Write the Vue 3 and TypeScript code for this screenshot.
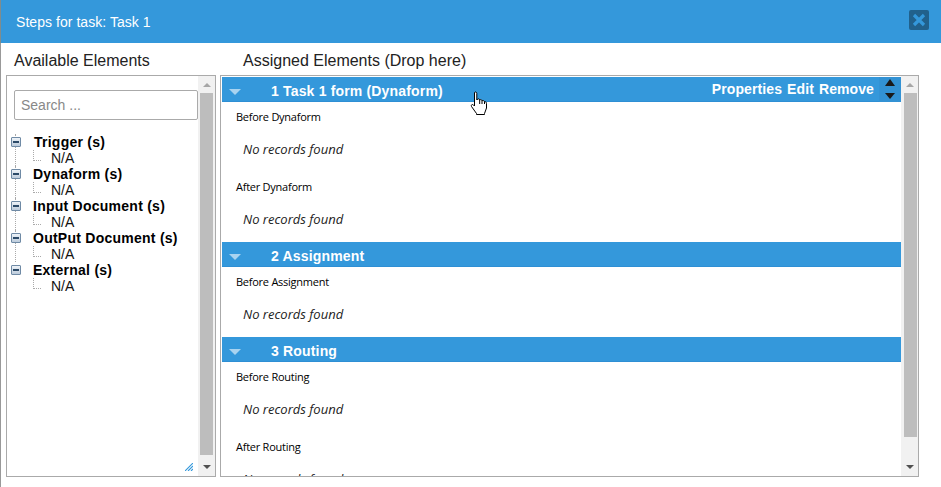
<script setup lang="ts">
interface StepGroup {
  label: string
}

interface Step {
  title: string
  groups: StepGroup[]
  actions?: boolean
}

const trees: string[] = ['Trigger (s)', 'Dynaform (s)', 'Input Document (s)', 'OutPut Document (s)', 'External (s)']

const steps: Step[] = [
  { title: '1 Task 1 form (Dynaform)', actions: true, groups: [{ label: 'Before Dynaform' }, { label: 'After Dynaform' }] },
  { title: '2 Assignment', groups: [{ label: 'Before Assignment' }] },
  { title: '3 Routing', groups: [{ label: 'Before Routing' }, { label: 'After Routing' }] },
]
</script>

<template>
  <div class="modal">
    <header class="title-bar">
      <span class="title">Steps for task: Task 1</span>
      <button class="close" type="button" aria-label="Close">
        <svg width="14" height="14" viewBox="0 0 14 14">
          <path d="M2 2 L12 12 M12 2 L2 12" stroke="#3498db" stroke-width="3.2" fill="none" />
        </svg>
      </button>
    </header>

    <div class="columns">
      <section class="left">
        <h2 class="col-title">Available Elements</h2>
        <div class="panel">
          <div class="panel-body">
            <input class="search" type="text" placeholder="Search ..." />
            <ul class="tree">
              <li v-for="item in trees" :key="item" class="tree-item">
                <div class="tree-head">
                  <span class="expander"></span>
                  <span class="tree-label">{{ item }}</span>
                </div>
                <div class="tree-leaf"><span class="leaf-line"></span>N/A</div>
              </li>
            </ul>
            <svg class="resize" width="8" height="8" viewBox="0 0 8 8">
              <path d="M0 8 L8 0 M3 8 L8 3 M6 8 L8 6" stroke="#3498db" stroke-width="1.1" fill="none" />
            </svg>
          </div>
          <div class="scrollbar">
            <span class="arrow up"></span>
            <span class="thumb"></span>
            <span class="arrow down"></span>
          </div>
        </div>
      </section>

      <section class="right">
        <h2 class="col-title">Assigned Elements (Drop here)</h2>
        <div class="panel">
          <div class="panel-body steps">
            <article v-for="step in steps" :key="step.title" class="step">
              <div class="step-head">
                <span class="caret"></span>
                <span class="step-title">{{ step.title }}</span>
                <div v-if="step.actions" class="actions">
                  <a>Properties</a>
                  <a>Edit</a>
                  <a>Remove</a>
                  <span class="sorter">
                    <span class="sort-up"></span>
                    <span class="sort-down"></span>
                  </span>
                </div>
              </div>
              <div v-for="group in step.groups" :key="group.label" class="group">
                <div class="group-label">{{ group.label }}</div>
                <div class="group-empty">No records found</div>
              </div>
            </article>
          </div>
          <div class="scrollbar">
            <span class="arrow up"></span>
            <span class="thumb"></span>
            <span class="arrow down"></span>
          </div>
        </div>
      </section>
    </div>

    <svg class="cursor" width="18" height="25" viewBox="0 0 18 25">
      <path
        d="M4.5 1.5 C5.5 0.5 6.8 1 6.8 2.5 V9 L7.8 8 C8.8 7.7 9.5 8 9.7 9 C10.5 8.3 11.7 8.5 12 9.7 C13 9.2 14.2 9.6 14.5 10.7 C15.5 10.5 16.5 11 16.5 12.5 V17 L14.5 22.5 V23.5 H6.5 V22.5 L1.5 15.5 C0.8 14 2.2 12.8 3.5 14 L4.5 15 Z"
        fill="#fff"
        stroke="#000"
        stroke-width="1"
      />
      <path d="M9.7 9 V13 M12 9.7 V13 M14.5 10.7 V13" stroke="#000" stroke-width="1" fill="none" />
    </svg>
  </div>
</template>

<style>
html,
body {
  margin: 0;
  background: #fff;
}
</style>

<style scoped>
.modal {
  position: relative;
  width: 941px;
  height: 487px;
  overflow: hidden;
  background: #fff;
  font-family: "Liberation Sans", Arial, sans-serif;
  color: #000;
}

.title-bar {
  display: flex;
  align-items: center;
  justify-content: space-between;
  height: 43px;
  padding: 0 12px 0 15px;
  background: #3498db;
  border-left: 1px solid #7f8c8d;
  box-sizing: border-box;
}

.title {
  color: #fff;
  font-size: 14px;
  letter-spacing: 0.05px;
}

.close {
  display: flex;
  align-items: center;
  justify-content: center;
  width: 20px;
  height: 20px;
  margin-top: -4px;
  padding: 0;
  border: 0;
  border-radius: 2px;
  background: #21618c;
}

.columns {
  display: flex;
  height: 444px;
  border-left: 1px solid #999;
  box-sizing: border-box;
}

.left {
  width: 210px;
  margin-left: 5px;
}

.right {
  width: 699px;
  margin-left: 4px;
}

.col-title {
  margin: 0;
  height: 32px;
  padding-top: 9px;
  padding-left: 8px;
  box-sizing: border-box;
  font-size: 16px;
  font-weight: 400;
  line-height: 18px;
  color: #222;
}

.right .col-title {
  padding-left: 23px;
}

.panel {
  display: flex;
  height: 402px;
  border: 1px solid #aaa;
  box-sizing: border-box;
  overflow: hidden;
}

.panel-body {
  position: relative;
  flex: 1;
  min-width: 0;
  overflow: hidden;
}

.search {
  display: block;
  width: 184px;
  height: 30px;
  margin: 14px 0 0 7px;
  padding: 0 6px;
  border: 1px solid #aaa;
  border-radius: 2px;
  box-sizing: border-box;
  font: 14px "Liberation Sans", Arial, sans-serif;
  outline: none;
}

.search::placeholder {
  color: #888;
}

.tree {
  margin: 14px 0 0;
  padding: 0;
  list-style: none;
}

.tree-item {
  position: relative;
  height: 32px;
}

.tree-item:not(:last-child)::before {
  content: "";
  position: absolute;
  left: 8px;
  top: 0;
  height: 32px;
  border-left: 1px dotted #aaa;
}

.tree-head {
  position: relative;
  display: flex;
  align-items: center;
  height: 16px;
  padding-left: 4px;
}

.expander {
  position: relative;
  width: 8px;
  height: 8px;
  border: 1px solid #6f8aa5;
  border-radius: 1px;
  background: linear-gradient(#eef3f8, #bccbdb);
}

.expander::after {
  content: "";
  position: absolute;
  left: 1px;
  top: 3px;
  width: 6px;
  height: 2px;
  background: #2c4a68;
}

.tree-label {
  margin-left: 12px;
  font-size: 14px;
  font-weight: 700;
  letter-spacing: 0.25px;
  line-height: 16px;
}

.tree-item:first-child .tree-label {
  margin-left: 13px;
}

.tree-leaf {
  position: relative;
  height: 16px;
  padding-left: 44px;
  font-size: 14px;
  line-height: 16px;
  color: #111;
}

.leaf-line {
  position: absolute;
  left: 26px;
  top: 0;
  width: 7px;
  height: 10px;
  border-left: 1px dotted #aaa;
  border-bottom: 1px dotted #aaa;
}

.resize {
  position: absolute;
  right: 5px;
  bottom: 5px;
}

.scrollbar {
  display: flex;
  flex-direction: column;
  align-items: center;
  flex: none;
  width: 17px;
  background: #f1f1f1;
}

.arrow {
  flex: none;
  width: 0;
  height: 0;
  border-left: 4px solid transparent;
  border-right: 4px solid transparent;
}

.arrow.up {
  margin: 7px 0 6px;
  border-bottom: 4px solid #a6a6a6;
}

.arrow.down {
  margin: 7px 0 7px;
  border-top: 4px solid #505050;
}

.thumb {
  flex: 1;
  width: 13px;
  margin-bottom: 3px;
  background: #bdbdbd;
}

.right .thumb {
  margin-bottom: 21px;
  margin-left: 2px;
}

.steps {
  padding: 1px 0 0 1px;
}

.step-head {
  display: flex;
  align-items: center;
  height: 25px;
  background: #3498db;
  border-bottom: 1px solid #2e8fd4;
  box-sizing: border-box;
  color: #fff;
}

.caret {
  flex: none;
  width: 0;
  height: 0;
  margin: 6px 0 0 7px;
  border-left: 6px solid transparent;
  border-right: 6px solid transparent;
  border-top: 6px solid #a9d3f0;
}

.step-title {
  margin-top: 4px;
  margin-left: 30px;
  font-size: 14px;
  font-weight: 700;
  letter-spacing: 0.17px;
}

.actions {
  display: flex;
  align-items: center;
  gap: 5px;
  margin-left: auto;
  font-size: 14px;
  font-weight: 700;
  letter-spacing: 0.1px;
}

.sorter {
  display: flex;
  flex-direction: column;
  align-items: center;
  justify-content: center;
  gap: 7px;
  width: 22px;
  height: 25px;
  background: #3292d4;
}

.sort-up {
  border-left: 5px solid transparent;
  border-right: 5px solid transparent;
  border-bottom: 7px solid #1a1a1a;
}

.sort-down {
  border-left: 5px solid transparent;
  border-right: 5px solid transparent;
  border-top: 6px solid #1a1a1a;
}

.group {
  height: 70px;
  font-family: "Open Sans", sans-serif;
}

.group-label {
  height: 30px;
  padding-left: 14px;
  font-size: 11px;
  letter-spacing: -0.25px;
  line-height: 29px;
  color: #000;
}

.group-empty {
  height: 35px;
  padding-left: 21px;
  font-size: 13px;
  font-style: italic;
  line-height: 35px;
  color: #222;
}

.cursor {
  position: absolute;
  left: 470px;
  top: 91px;
}
</style>
